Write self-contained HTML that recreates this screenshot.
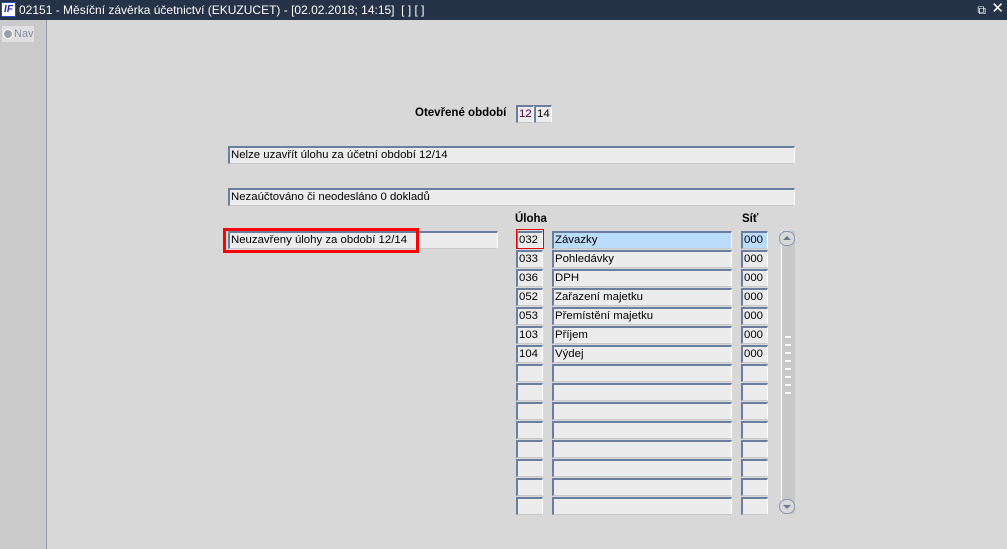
<!DOCTYPE html>
<html><head><meta charset="utf-8"><style>
*{margin:0;padding:0;box-sizing:border-box}
body{width:1007px;height:549px;overflow:hidden;background:#d8d8d8;font-family:"Liberation Sans",Arial,sans-serif;font-size:12px;color:#000;position:relative}
.title{position:absolute;left:0;top:0;width:1007px;height:20px;background:#253248;color:#fff;font-size:12px;line-height:20px;padding-left:19px}
.logo{position:absolute;left:1px;top:2px;width:15px;height:15px;background:#fff;border:1px solid #2a4ad0;color:#1a2aa0;font-size:10px;font-weight:bold;font-style:italic;line-height:13px;text-align:center}
.left{position:absolute;left:0;top:20px;width:47px;height:529px;background:#cacaca;border-right:1px solid #8f9bb3}
.nav{position:absolute;left:2px;top:26px;width:32px;height:16px;background:#e0e0e0;color:#8890a8;font-size:11px;line-height:16px;padding-left:12px}
.nav:before{content:"";position:absolute;left:1px;top:3px;width:8px;height:8px;border-radius:50%;background:#9aa0aa;border:1px solid #fff}
.f{position:absolute;height:18px;background:#ececec;border-top:2px solid #6a7fa0;border-left:2px solid #6a7fa0;border-right:1px solid #fff;border-bottom:1px solid #c8c8c8;line-height:15px;padding-left:1px;font-size:11.4px;white-space:nowrap;overflow:hidden}
.lbl{position:absolute;font-weight:bold;font-size:11.5px}
.sb{position:absolute;left:781px;top:231px;width:14px;height:283px;background:#c8c8c8;border-left:1px solid #fff}
.btn{position:absolute;left:779px;width:16px;height:15px;background:#d8d8d8;border:1px solid #8a98b0;border-radius:7px}
</style></head><body>
<div class="title"><div class="logo">IF</div>02151 - Měsíční závěrka účetnictví (EKUZUCET) - [02.02.2018; 14:15]&nbsp; [ ] [ ]
<span style="position:absolute;right:21px;top:0;font-size:12px">&#x29C9;</span><span style="position:absolute;right:3px;top:-1px;font-size:15px">✕</span></div>
<div class="left"></div>
<div class="nav">Nav</div>

<div class="lbl" style="left:415px;top:107px">Otevřené období</div>
<div class="f" style="left:516px;top:105px;width:18px;color:#500040">12</div>
<div class="f" style="left:534px;top:105px;width:18px">14</div>

<div class="f" style="left:228px;top:146px;width:567px">Nelze uzavřít úlohu za účetní období 12/14</div>
<div class="f" style="left:228px;top:188px;width:567px">Nezaúčtováno či neodesláno 0 dokladů</div>
<div class="f" style="left:228px;top:231px;width:270px">Neuzavřeny úlohy za období 12/14</div>
<div style="position:absolute;left:223px;top:228px;width:196px;height:25px;border:3px solid #f00"></div>

<div class="lbl" style="left:515px;top:213px">Úloha</div>
<div class="lbl" style="left:742px;top:213px">Síť</div>

<div class="f" style="left:516px;top:231px;width:27px">032</div>
<div style="position:absolute;left:516px;top:229px;width:28px;height:20px;border:1px solid #e00000"></div>
<div class="f" style="left:552px;top:231px;width:180px;background:#bcdcfc">Závazky</div>
<div class="f" style="left:741px;top:231px;width:27px;background:#bcdcfc">000</div>

<div class="f" style="left:516px;top:250px;width:27px">033</div><div class="f" style="left:552px;top:250px;width:180px">Pohledávky</div><div class="f" style="left:741px;top:250px;width:27px">000</div>
<div class="f" style="left:516px;top:269px;width:27px">036</div><div class="f" style="left:552px;top:269px;width:180px">DPH</div><div class="f" style="left:741px;top:269px;width:27px">000</div>
<div class="f" style="left:516px;top:288px;width:27px">052</div><div class="f" style="left:552px;top:288px;width:180px">Zařazení majetku</div><div class="f" style="left:741px;top:288px;width:27px">000</div>
<div class="f" style="left:516px;top:307px;width:27px">053</div><div class="f" style="left:552px;top:307px;width:180px">Přemístění majetku</div><div class="f" style="left:741px;top:307px;width:27px">000</div>
<div class="f" style="left:516px;top:326px;width:27px">103</div><div class="f" style="left:552px;top:326px;width:180px">Příjem</div><div class="f" style="left:741px;top:326px;width:27px">000</div>
<div class="f" style="left:516px;top:345px;width:27px">104</div><div class="f" style="left:552px;top:345px;width:180px">Výdej</div><div class="f" style="left:741px;top:345px;width:27px">000</div>
<div class="f" style="left:516px;top:364px;width:27px"></div><div class="f" style="left:552px;top:364px;width:180px"></div><div class="f" style="left:741px;top:364px;width:27px"></div>
<div class="f" style="left:516px;top:383px;width:27px"></div><div class="f" style="left:552px;top:383px;width:180px"></div><div class="f" style="left:741px;top:383px;width:27px"></div>
<div class="f" style="left:516px;top:402px;width:27px"></div><div class="f" style="left:552px;top:402px;width:180px"></div><div class="f" style="left:741px;top:402px;width:27px"></div>
<div class="f" style="left:516px;top:421px;width:27px"></div><div class="f" style="left:552px;top:421px;width:180px"></div><div class="f" style="left:741px;top:421px;width:27px"></div>
<div class="f" style="left:516px;top:440px;width:27px"></div><div class="f" style="left:552px;top:440px;width:180px"></div><div class="f" style="left:741px;top:440px;width:27px"></div>
<div class="f" style="left:516px;top:459px;width:27px"></div><div class="f" style="left:552px;top:459px;width:180px"></div><div class="f" style="left:741px;top:459px;width:27px"></div>
<div class="f" style="left:516px;top:478px;width:27px"></div><div class="f" style="left:552px;top:478px;width:180px"></div><div class="f" style="left:741px;top:478px;width:27px"></div>
<div class="f" style="left:516px;top:497px;width:27px"></div><div class="f" style="left:552px;top:497px;width:180px"></div><div class="f" style="left:741px;top:497px;width:27px"></div>

<div class="sb"></div>
<div style="position:absolute;left:785px;top:332px;width:6px;height:68px;background:repeating-linear-gradient(#c8c8c8 0 4px,#fff 4px 6px,#c8c8c8 6px 8px);opacity:.9"></div>
<div class="btn" style="top:231px"><div style="position:absolute;left:3px;top:4px;width:0;height:0;border-left:4px solid transparent;border-right:4px solid transparent;border-bottom:4px solid #6a7a92"></div></div>
<div class="btn" style="top:499px"><div style="position:absolute;left:3px;top:5px;width:0;height:0;border-left:4px solid transparent;border-right:4px solid transparent;border-top:4px solid #6a7a92"></div></div>
</body></html>
